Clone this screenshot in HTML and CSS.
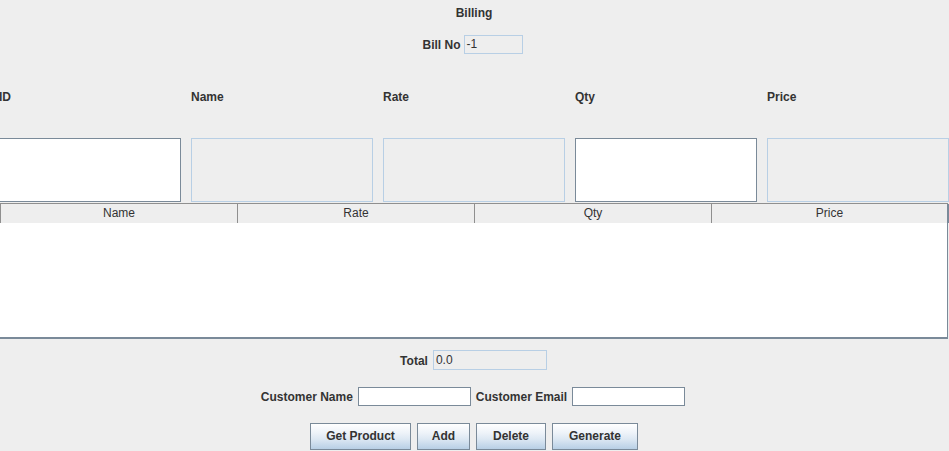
FILE: index.html
```
<!DOCTYPE html>
<html>
<head>
<meta charset="utf-8">
<link rel="stylesheet" href="styles.css">
</head>
<body>
<div class="app">
  <div class="title">Billing</div>
  <div class="row billno">
    <span class="lbl">Bill No</span>
    <div class="tf ro w58">-1</div>
  </div>
  <div class="grid labels">
    <span class="lbl">ID</span>
    <span class="lbl">Name</span>
    <span class="lbl">Rate</span>
    <span class="lbl">Qty</span>
    <span class="lbl">Price</span>
  </div>
  <div class="grid fields">
    <div class="big ed"></div>
    <div class="big ro"></div>
    <div class="big ro"></div>
    <div class="big ed"></div>
    <div class="big ro"></div>
  </div>
  <div class="table">
    <div class="thead">
      <div class="th">Name</div>
      <div class="th">Rate</div>
      <div class="th">Qty</div>
      <div class="th">Price</div>
    </div>
    <div class="tbody"></div>
  </div>
  <div class="row total">
    <span class="lbl">Total</span>
    <div class="tf ro w113">0.0</div>
  </div>
  <div class="row customer">
    <span class="lbl">Customer Name</span>
    <div class="tf ed w112"></div>
    <span class="lbl">Customer Email</span>
    <div class="tf ed w112"></div>
  </div>
  <div class="row buttons">
    <div class="btn w101">Get Product</div>
    <div class="btn w53">Add</div>
    <div class="btn w70">Delete</div>
    <div class="btn w86">Generate</div>
  </div>
</div>
</body>
</html>
```
FILE: styles.css
```
html, body {
  margin: 0;
  padding: 0;
  background: #eeeeee;
}
.app {
  width: 949px;
  height: 451px;
  overflow: hidden;
  font-family: "Liberation Sans", Arial, sans-serif;
  font-size: 12px;
  color: #333333;
  display: flex;
  flex-direction: column;
}
.lbl {
  font-weight: bold;
  white-space: nowrap;
}
.title {
  font-weight: bold;
  text-align: center;
  line-height: 16px;
  padding-top: 5px;
  padding-right: 1px;
}
.row {
  display: flex;
  justify-content: center;
  align-items: center;
  gap: 5px;
}
.billno {
  margin-top: 14px;
  height: 19px;
  gap: 3px;
  padding-right: 4px;
}
.tf {
  box-sizing: border-box;
  height: 19px;
  line-height: 17px;
  padding-left: 2px;
  color: #333;
  font-size: 12px;
}
.ro {
  background: #eeeeee;
  border: 1px solid #b8cfe5;
}
.ed {
  background: #ffffff;
  border: 1px solid #7a8a99;
}
.w58 { width: 59px; }
.w113 { width: 114px; }
.w112 { width: 113px; }
.grid {
  display: grid;
  grid-template-columns: repeat(5, 182px);
  column-gap: 10px;
  margin-left: -1px;
}
.labels {
  margin-top: 36px;
  line-height: 14px;
}
.fields {
  margin-top: 34px;
  margin-left: -2px;
  grid-template-columns: 183px 182px 182px 182px 182px;
}
.big {
  box-sizing: border-box;
  height: 64px;
}
.table {
  margin-top: 1px;
  width: 948px;
}
.thead {
  display: grid;
  grid-template-columns: 237px 237px 237px 237px;
  box-sizing: border-box;
  height: 20px;
  border-top: 1px solid #8f8f8f;
  border-bottom: 1px solid #8f8f8f;
  border-left: 1px solid #8f8f8f;
  width: 948px;
}
.th {
  text-align: center;
  line-height: 19px;
  font-size: 12px;
  color: #333;
  border-right: 1px solid #8f8f8f;
  background: #eeeeee;
}
.th:last-child {
  border-right: 2px solid #7a8a99;
}
.tbody {
  box-sizing: border-box;
  height: 116px;
  background: #ffffff;
  border-bottom: 2px solid #7a8a99;
  border-right: 1px solid #7a8a99;
}
.total {
  margin-top: 11px;
  height: 20px;
  padding-right: 2px;
}
.total .tf { height: 20px; line-height: 19px; }
.total .lbl { padding-top: 1px; }
.customer {
  margin-top: 17px;
  height: 19px;
  gap: 5px;
  padding-right: 3px;
}
.buttons {
  margin-top: 17px;
  gap: 6px;
  padding-right: 1px;
}
.btn {
  box-sizing: border-box;
  height: 27px;
  line-height: 25px;
  text-align: center;
  font-weight: bold;
  color: #333;
  border: 1px solid #7a8a99;
  background: linear-gradient(to bottom, #ffffff 0%, #eef3f9 35%, #dde8f3 60%, #b8cfe5 100%);
}
.w101 { width: 101px; }
.w53 { width: 53px; }
.w70 { width: 70px; }
.w86 { width: 86px; }
```
